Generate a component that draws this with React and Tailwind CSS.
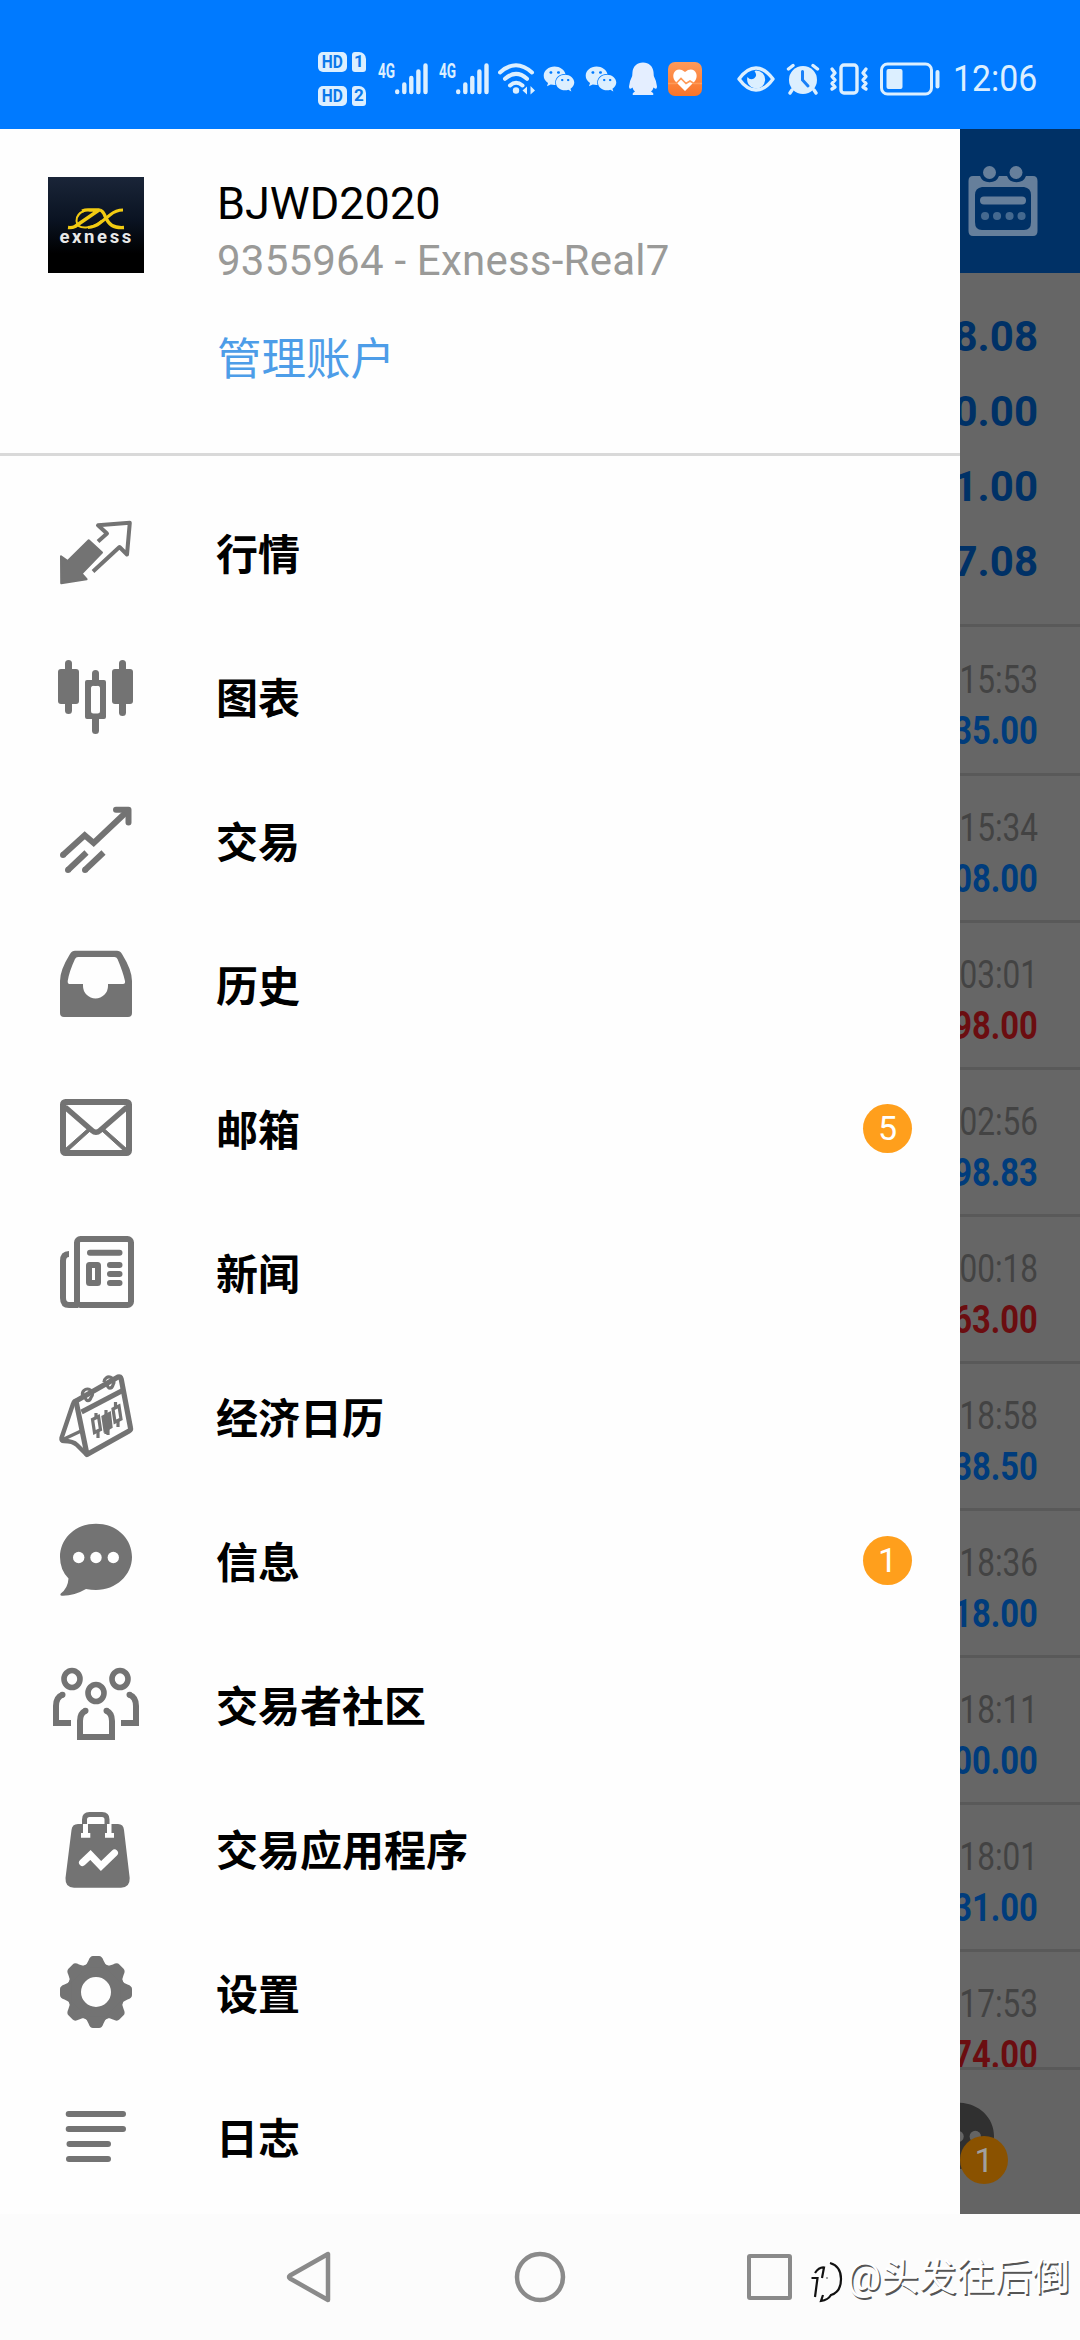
import React from "react";
import { FaWeixin } from "react-icons/fa";

const G = "#737373";

function MenuIcon({ children }) {
  return (
    <svg viewBox="0 0 96 96" className="h-24 w-24 shrink-0" fill="none" stroke="none">
      {children}
    </svg>
  );
}

const QuotesIcon = () => (
  <MenuIcon>
    <path
      d="M13 52.2L19.7 57L40.7 36.2L54 48.5L33.7 69.6L38.6 75.2L13.2 79.2Z"
      fill={G}
      stroke={G}
      strokeWidth="2"
      strokeLinejoin="round"
    />
    <path
      d="M50 37.5L59 29.5L50 21.3L81.8 18.8L79 50.5L71.5 43L45 67.5"
      stroke={G}
      strokeWidth="4"
      strokeLinejoin="round"
    />
  </MenuIcon>
);

const ChartIcon = () => (
  <MenuIcon>
    <g fill={G}>
      <rect x="10" y="21" width="21" height="35" rx="3" />
      <rect x="17" y="12" width="7" height="54" rx="3.5" />
      <rect x="64" y="21" width="21" height="35" rx="3" />
      <rect x="71" y="12" width="7" height="56" rx="3.5" />
      <rect x="44" y="22" width="7" height="16" rx="3.5" />
      <rect x="44" y="66" width="7" height="20" rx="3.5" />
      <path
        fillRule="evenodd"
        d="M39 32H56Q58 32 58 34V69Q58 71 56 71H39Q37 71 37 69V34Q37 32 39 32ZM45.500 37.700Q43 37.700 43 40.200V63Q43 65.500 45.500 65.500H49.500Q52 65.500 52 63V40.200Q52 37.700 49.500 37.700Z"
      />
    </g>
  </MenuIcon>
);

const TradeIcon = () => (
  <MenuIcon>
    <g stroke={G} strokeWidth="6">
      <path d="M80.500 18L45.700 51L36.700 43.200L15 63" />
      <path d="M68 17.700H80.500V30.500" strokeLinecap="round" strokeLinejoin="round" />
      <path d="M38.500 60.500L20 78M55.500 60.500L37 78" />
    </g>
    <g fill={G}>
      <circle cx="15" cy="63" r="3" />
      <circle cx="20" cy="78" r="3" />
      <circle cx="37" cy="78" r="3" />
    </g>
  </MenuIcon>
);

const HistoryIcon = () => (
  <MenuIcon>
    <path
      fillRule="evenodd"
      fill={G}
      d="M27 14.700H69Q72 14.700 74 18Q84 34 84 45V77Q84 81 80 81H16Q12 81 12 77V45Q12 34 22 18Q24 14.700 27 14.700ZM30 21Q28 21 27 23Q21 36 19.700 45Q19.500 48 21.500 48H35V50A12.500 12.500 0 0 0 60 50V48H75Q77.500 48 77 45Q75 36 69.500 23Q68.500 21 66.500 21Z"
    />
  </MenuIcon>
);

const MailIcon = () => (
  <MenuIcon>
    <rect x="15" y="22" width="66" height="51" rx="2.500" stroke={G} strokeWidth="6" />
    <path d="M17 27L44 50.500Q48 54 52 50.500L79 27" stroke={G} strokeWidth="5.500" />
    <path d="M17 69L39.500 49L42 51L20 71ZM79 69L56.500 49L54 51L76 71Z" fill={G} stroke={G} />
  </MenuIcon>
);

const NewsIcon = () => (
  <MenuIcon>
    <g stroke={G} strokeWidth="6">
      <rect x="29" y="15" width="54" height="66" rx="3.500" />
      <path d="M21 30Q15 30 15 37V74Q15 81 21 81H30" />
      <rect x="41" y="41" width="9" height="18" rx="0.5" />
      <path d="M42 28.700H71.500M62 41H71.500M62 50H71.500M62 59H71.500" strokeLinecap="round" />
    </g>
  </MenuIcon>
);

const CalendarIcon = () => (
  <MenuIcon>
    <g stroke={G} strokeWidth="5.200" strokeLinejoin="round">
      <path d="M28 33L70 9Q72.500 8 73.200 11L82.500 60Q83 62 81 63L39 86.500Z" />
      <path d="M33.500 44L75.500 22" />
      <path d="M28 33Q26 32.500 25 36L13.500 70Q13 73 16 73Q25 73 29 77L39 87" strokeWidth="4.400" />
      <path d="M15 71.500L33 63" strokeWidth="3.400" />
    </g>
    <g stroke={G} strokeWidth="3.200">
      <path d="M34.500 27A5 5 0 1 1 43 29.500Q42 33 39 32.500Q37 31 37.500 29" />
      <path d="M56 14A5 5 0 1 1 65 17Q64 20.500 61 20Q59 18.500 59.500 16.500" />
      <path d="M48 45V51M50 63V70M58 42V66M60 60V67M67.500 34V40M70 52V59" />
      <path d="M44.500 51.500L50.500 48.500L52.500 61.500L46.500 64.500Z" />
      <path d="M55 49L61.500 45.500L63 59L57 62.500Z" fill={G} />
      <path d="M65 41L71 38L73 51L67 54Z" />
    </g>
  </MenuIcon>
);

const BubbleShape = ({ fill, dots }) => (
  <>
    <path
      fill={fill}
      d="M48 11.700C68 11.700 84 26 84 45C84 63 68 78 48 78Q43 78 38 77Q26 84 14 83.700Q11.500 83.500 12.800 81.500Q20 76 20.500 66.500Q12 58 12 45C12 26 28 11.700 48 11.700Z"
    />
    <circle cx="30.700" cy="45.500" r="5.700" fill={dots} />
    <circle cx="48" cy="45.500" r="5.700" fill={dots} />
    <circle cx="65.300" cy="45.500" r="5.700" fill={dots} />
  </>
);

const MessageIcon = () => (
  <MenuIcon>
    <BubbleShape fill={G} dots="#fff" />
  </MenuIcon>
);

const CommunityIcon = () => (
  <MenuIcon>
    <g stroke={G} strokeWidth="5.600">
      <ellipse cx="24" cy="23" rx="8" ry="8.500" />
      <ellipse cx="72" cy="23" rx="8" ry="8.500" />
      <ellipse cx="48" cy="37" rx="8" ry="8.500" />
      <g strokeWidth="6">
        <path d="M38 54.500Q32 57 32 65V81H64V65Q64 57 58 54.500" />
        <path d="M15 38.500Q8 41 8 50V67H23M81 38.500Q88 41 88 50V67H73" />
      </g>
    </g>
    <g fill={G}>
      <circle cx="37.500" cy="54.700" r="3" />
      <circle cx="58.500" cy="54.700" r="3" />
      <circle cx="14.500" cy="38.700" r="3" />
      <circle cx="81.500" cy="38.700" r="3" />
    </g>
  </MenuIcon>
);

const AppsIcon = () => (
  <MenuIcon>
    <path
      fill={G}
      d="M30 24H70Q75.500 24 76 30L81.700 78Q82 87.700 73 87.700H26Q17 87.700 17.500 78L23.500 30Q24 24 30 24Z"
    />
    <path d="M36.500 24V19.500Q36.500 14.500 41.500 14.500H54Q59 14.500 59 19.500V24" stroke={G} strokeWidth="5" />
    <path
      fill="#fff"
      d="M35 24H40V33H42.300V37.700H33V33H35ZM59 24H63.500V33H66V37.700H57V33H59Z"
    />
    <path
      d="M34.500 62.500L42.500 55L53 66L66.500 53"
      stroke="#fff"
      strokeWidth="7"
      strokeLinecap="round"
    />
  </MenuIcon>
);

const TOOTH = "M35.500 23.500Q39 20.500 40.500 16.500Q42 12 45 12H51Q54 12 55.500 16.500Q57 20.500 60.500 23.500Z";
const SettingsIcon = () => (
  <MenuIcon>
    <circle cx="48" cy="48" r="22" stroke={G} strokeWidth="14" />
    {[0, 45, 90, 135, 180, 225, 270, 315].map((a) => (
      <path key={a} d={TOOTH} fill={G} transform={`rotate(${a} 48 48)`} />
    ))}
  </MenuIcon>
);

const JournalIcon = () => (
  <MenuIcon>
    <path
      d="M20.700 26H75M20.700 41H75M21.500 56H60M21 71H60"
      stroke={G}
      strokeWidth="6"
      strokeLinecap="round"
    />
  </MenuIcon>
);

const MENU = [
  { label: "行情", Icon: QuotesIcon },
  { label: "图表", Icon: ChartIcon },
  { label: "交易", Icon: TradeIcon },
  { label: "历史", Icon: HistoryIcon },
  { label: "邮箱", Icon: MailIcon, badge: 5 },
  { label: "新闻", Icon: NewsIcon },
  { label: "经济日历", Icon: CalendarIcon },
  { label: "信息", Icon: MessageIcon, badge: 1 },
  { label: "交易者社区", Icon: CommunityIcon },
  { label: "交易应用程序", Icon: AppsIcon },
  { label: "设置", Icon: SettingsIcon },
  { label: "日志", Icon: JournalIcon },
];

const TOTALS = ["8.08", "0.00", "1.00", "7.08"];

const DEALS = [
  { time: "15:53", value: "35.00", up: true },
  { time: "15:34", value: "08.00", up: true },
  { time: "03:01", value: "98.00", up: false },
  { time: "02:56", value: "98.83", up: true },
  { time: "00:18", value: "63.00", up: false },
  { time: "18:58", value: "38.50", up: true },
  { time: "18:36", value: "18.00", up: true },
  { time: "18:11", value: "00.00", up: true },
  { time: "18:01", value: "31.00", up: true },
  { time: "17:53", value: "74.00", up: false },
];

const S = "#dcefff";

function HdTag({ n }) {
  return (
    <div className="flex h-5 gap-[5px] text-[#0a78ea]">
      <span className="flex w-[29px] items-center justify-center rounded-[5px] bg-[#dcefff] text-[18px] font-bold leading-none">
        <span className="scale-x-[0.86]">HD</span>
      </span>
      <span className="flex w-[14px] items-center justify-center rounded-[3px] rounded-tr-[7px] bg-[#dcefff] text-[17px] font-bold leading-none">
        {n}
      </span>
    </div>
  );
}

function Signal() {
  return (
    <div className="flex h-[32px] w-[50px] shrink-0 items-start">
      <span className="w-[17px] origin-left scale-x-[0.68] text-[20px] font-bold leading-[16px] text-[#dcefff]">4G</span>
      <svg viewBox="0 0 33 32" className="h-8 w-[33px] shrink-0" stroke={S} strokeWidth="4.400" strokeLinecap="round">
        <path d="M2.200 28.500V29M9.300 21.500V29M16.300 15V29M23.400 8.500V29M30.500 2.500V29" />
      </svg>
    </div>
  );
}

function StatusBar() {
  return (
    <div className="flex h-[129px] shrink-0 items-center bg-[#007aff] pl-[318px] pt-7">
      <div className="flex w-[60px] shrink-0 flex-col gap-[14px]">
        <HdTag n={1} />
        <HdTag n={2} />
      </div>
      <Signal />
      <div className="w-[11px] shrink-0" />
      <Signal />
      <svg viewBox="0 0 38 32" className="ml-[9px] h-8 w-[38px] shrink-0" fill="none" stroke={S} strokeWidth="4">
        <path d="M2 9.500Q18 -5 34 9.500M7 15.800Q18 6 29 15.800M12 22.500Q18 17 24.500 22.500" strokeLinecap="round" />
        <circle cx="18" cy="27.500" r="3.200" fill={S} stroke="none" />
        <path d="M29 23.500V31.500L24.500 27.500ZM32.500 23L37 27.500L32.500 31.500Z" fill={S} stroke="none" />
      </svg>
      <FaWeixin className="ml-[7px] h-8 w-8 shrink-0 text-[#dcefff]" />
      <FaWeixin className="ml-[10px] h-8 w-8 shrink-0 text-[#dcefff]" />
      <svg viewBox="0 0 28 34" className="ml-3 h-[34px] w-7 shrink-0" fill="#e4eeff">
        <path d="M14 0.500C20 0.500 24 4.500 24.500 10L24.800 14Q27.500 19 28 24.500Q28 28.500 24.500 25.500Q24 28 22 29.500Q25.500 31.500 24 33H4Q2.500 31.500 6 29.500Q4 28 3.500 25.500Q0 28.500 0 24.500Q0.500 19 3.200 14L3.500 10C4 4.500 8 0.500 14 0.500Z" />
      </svg>
      <svg viewBox="0 0 34 34" className="ml-[11px] h-[34px] w-[34px] shrink-0">
        <defs>
          <linearGradient id="health" x1="0" y1="0" x2="0" y2="1">
            <stop offset="0" stopColor="#ff9a5a" />
            <stop offset="1" stopColor="#f97428" />
          </linearGradient>
        </defs>
        <rect width="34" height="34" rx="7" fill="url(#health)" />
        <path d="M17 29L7 19C2 12 9 3 17 10C25 3 32 12 27 19Z" fill="#fff" />
        <path d="M0 21.500H8L13 16.500L18 21.500L22 19L26 21.500H34" fill="none" stroke="#ff9a57" strokeWidth="1.700" />
      </svg>
      <svg viewBox="0 0 38 28" className="ml-[35px] h-7 w-[38px] shrink-0">
        <path d="M2 14Q10 3 19 3Q28 3 36 14Q28 25 19 25Q10 25 2 14Z" fill="none" stroke={S} strokeWidth="3.400" strokeLinejoin="round" />
        <path d="M19 5.500A9 9 0 1 1 10.500 12Q13 15.500 17 13.500Q21 11 17.500 6Z" fill={S} />
      </svg>
      <svg viewBox="0 0 34 32" className="ml-[11px] h-8 w-[34px] shrink-0" fill="none" stroke={S} strokeLinecap="round">
        <circle cx="17" cy="17" r="14" fill={S} stroke="none" />
        <path d="M2.500 6L7 2.500M31.500 6L27 2.500M6 27L4 30M28 27L30 30" strokeWidth="3.400" />
        <path d="M16.500 8.500V17L22 23" stroke="#1a80f8" strokeWidth="3" />
      </svg>
      <svg viewBox="0 0 40 32" className="ml-[9px] h-8 w-10 shrink-0" fill="none" stroke={S} strokeWidth="3.400" strokeLinejoin="round" strokeLinecap="round">
        <rect x="12" y="2" width="16" height="28" rx="3" />
        <path d="M3 6L6 10L3 13.500L6 17L3 20.500L6 24L3 26M37 6L34 10L37 13.500L34 17L37 20.500L34 24L37 26" />
      </svg>
      <svg viewBox="0 0 60 34" className="ml-[11px] h-[34px] w-[60px] shrink-0" fill="none">
        <rect x="1.500" y="2" width="50" height="30" rx="6" stroke={S} strokeWidth="3" />
        <rect x="6.500" y="7" width="16" height="20" rx="2" fill={S} />
        <path d="M57.500 10V24.500" stroke={S} strokeWidth="4" strokeLinecap="round" />
      </svg>
      <span className="ml-[13px] origin-left scale-x-[0.94] pt-px text-[36px] leading-none text-[#dcefff]">12:06</span>
    </div>
  );
}

function Drawer() {
  return (
    <aside className="flex w-[960px] shrink-0 flex-col bg-[#fefefe]">
      <div className="flex h-[327px] shrink-0 border-b-[3px] border-[#d9d9d9] pl-12 pt-12">
        <svg viewBox="0 0 96 96" className="h-24 w-24 shrink-0">
          <defs>
            <linearGradient id="logo" x1="0" y1="0" x2="0" y2="1">
              <stop offset="0" stopColor="#1a2538" />
              <stop offset="0.45" stopColor="#0a1322" />
              <stop offset="0.8" stopColor="#000" />
            </linearGradient>
          </defs>
          <rect width="96" height="96" fill="url(#logo)" />
          <g fill="none" stroke="#f2cb12" strokeLinejoin="round">
            <path d="M34 34Q38 32.500 42 33H51L27 49.500Q24 51 20 50.500" strokeWidth="3.400" />
            <path d="M37 33.500Q28 37 28.500 44Q29 51 38 50.500Q46 50 54 43.500" strokeWidth="2" />
            <path d="M52 33Q55 34 57 39Q60 46 64 48.500Q68 51 76 50.500" strokeWidth="3.400" />
            <path d="M75 33Q68 33 62 38L52 46Q47 50 40 50.500" strokeWidth="3" />
          </g>
          <text x="11.500" y="66" letterSpacing="1.200" textLength="73" fill="#e8e8e8" fontFamily="Roboto" fontWeight="700" fontSize="18.500">
            exness
          </text>
        </svg>
        <div className="ml-[73px] flex flex-col items-start whitespace-nowrap">
          <div className="text-[45px] leading-[54px] text-black">BJWD2020</div>
          <div className="text-[42px] leading-[60px] tracking-[0.22px] text-[#9a9a98]">9355964 - Exness-Real7</div>
          <div className="mt-[39px] text-[44.500px] leading-[60px] text-[#4d9de8]">管理账户</div>
        </div>
      </div>
      <nav className="flex flex-col pt-6">
        {MENU.map(({ label, Icon, badge }) => (
          <div key={label} className="flex h-36 items-center pl-12 pr-12">
            <Icon />
            <span className="ml-[72px] flex-1 pt-[7px] text-[42px] font-bold leading-[60px] text-black">{label}</span>
            {badge && (
              <span className="flex h-[49px] w-[49px] items-center justify-center rounded-full bg-[#ff9f1c] text-[34px] leading-none text-white">
                {badge}
              </span>
            )}
          </div>
        ))}
      </nav>
    </aside>
  );
}

function DimmedHistory() {
  return (
    <div className="flex min-w-0 flex-1 flex-col overflow-hidden bg-[#666]">
      <div className="flex h-36 shrink-0 items-center bg-[#003166] pl-2">
        <svg viewBox="0 0 70 72" className="h-[72px] w-[70px]" fill="none">
          <path
            fill="#667f9b"
            fillRule="evenodd"
            d="M5 11H12A10 9 0 0 0 31 11H39A10 9 0 0 0 58 11H65Q69.500 11 69.500 16V66Q69.500 71 65 71H5Q0.500 71 0.500 66V16Q0.500 11 5 11ZM14 22Q7 23 7 30V57Q7 65 14 65H56Q63 65 63 57V30Q63 23 56 22Z"
          />
          <circle cx="21.500" cy="7.500" r="6.500" fill="#667f9b" />
          <circle cx="48" cy="7.500" r="6.500" fill="#667f9b" />
          <path d="M16 35.500H54" stroke="#667f9b" strokeWidth="8" strokeLinecap="round" />
          <path d="M17 51H17.100M29 51H29.100M41.500 51H41.600M53.500 51H53.600" stroke="#45698f" strokeWidth="8" strokeLinecap="round" />
        </svg>
      </div>
      <div className="flex h-[354px] shrink-0 flex-col items-end border-b-[3px] border-[#595959] pr-[42px] pt-[26px]">
        {TOTALS.map((t) => (
          <div key={t} className="text-[42px] font-bold leading-[75px] text-[#003166]">
            {t}
          </div>
        ))}
      </div>
      <div className="flex h-[1440px] shrink-0 flex-col overflow-hidden pt-px">
        {DEALS.map((d) => (
          <div
            key={d.time}
            className="flex h-[147px] shrink-0 flex-col items-end whitespace-nowrap border-b-[3px] border-[#595959] pr-[42px] pt-[27px] first:h-[148px]"
          >
            <div className="origin-right scale-x-[0.81] text-[39px] leading-[51px] text-[#434343]">{d.time}</div>
            <div
              className={
                "origin-right scale-x-[0.84] text-[39px] font-bold leading-[51px] " +
                (d.up ? "text-[#003c7c]" : "text-[#6b0d10]")
              }
            >
              {d.value}
            </div>
          </div>
        ))}
      </div>
      <div className="relative flex-1 border-t-[3px] border-[#595959] bg-[#646464]">
        <svg viewBox="0 0 96 96" className="absolute -left-[50px] top-[21px] h-24 w-24">
          <BubbleShape fill="#303030" dots="#646464" />
        </svg>
        <span className="absolute left-0 top-[66px] flex h-12 w-12 items-center justify-center rounded-full bg-[#8a5200] text-[34px] leading-none text-[#a0a0a0]">
          1
        </span>
      </div>
    </div>
  );
}

function NavBar() {
  return (
    <div className="flex h-[126px] shrink-0 items-center bg-[#fcfcfc] pl-[284px]">
      <svg viewBox="0 0 50 54" className="h-[54px] w-[50px] shrink-0" fill="none" stroke="#8a8a8a" strokeWidth="4.500" strokeLinejoin="round">
        <path d="M44 4V50L6 28.500Q4 27 6 25.500Z" />
      </svg>
      <svg viewBox="0 0 54 54" className="ml-[179px] h-[54px] w-[54px] shrink-0" fill="none" stroke="#8a8a8a" strokeWidth="4.500">
        <circle cx="27" cy="27" r="23" />
      </svg>
      <span className="ml-[180px] h-[46px] w-[45px] shrink-0 rounded-[3px] border-[4.500px] border-[#8a8a8a]" />
      <svg viewBox="0 0 34 44" className="ml-[19px] mt-2 h-11 w-[34px] shrink-0" fill="none">
        <path d="M4 38L6.500 19H0.500M4 14Q8 8 13 8.500L11 19M19 4Q30 7 30 20Q30 33 20 36Q17 41 10 42L12 36" stroke="#111" strokeWidth="2.200" />
        <circle cx="16" cy="19" r="1" fill="#888" />
      </svg>
      <span className="ml-[2px] whitespace-nowrap text-[38px] leading-none tracking-[-0.2px] text-white [text-shadow:1.5px_1.5px_0.5px_#555]">
        @头发往后倒
      </span>
    </div>
  );
}

export default function App() {
  return (
    <div className="flex h-[2340px] w-[1080px] flex-col overflow-hidden bg-white font-['Roboto','Noto_Sans_CJK_SC',sans-serif]">
      <StatusBar />
      <div className="flex h-[2085px] shrink-0">
        <Drawer />
        <DimmedHistory />
      </div>
      <NavBar />
    </div>
  );
}
